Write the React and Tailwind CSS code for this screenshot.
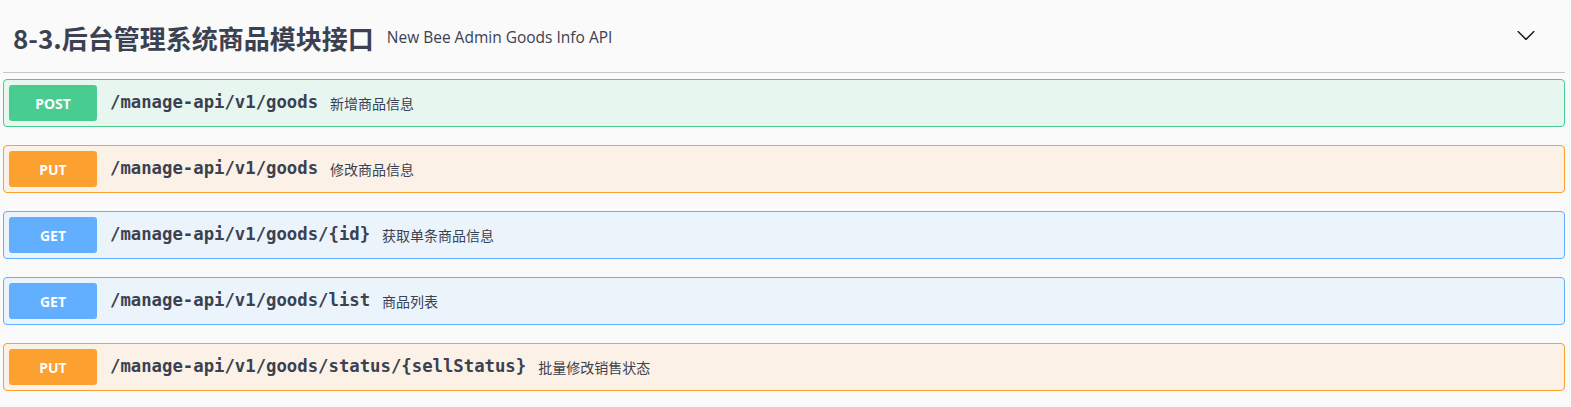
const ROW_STYLES = {
  POST: { row: 'bg-[#e8f6f0] border-[#49cc90]', badge: 'bg-[#49cc90]' },
  PUT: { row: 'bg-[#fcf1e6] border-[#fca130]', badge: 'bg-[#fca130]' },
  GET: { row: 'bg-[#ebf3fb] border-[#61affe]', badge: 'bg-[#61affe]' },
}

const OPERATIONS = [
  { method: 'POST', path: '/manage-api/v1/goods', summary: '新增商品信息' },
  { method: 'PUT', path: '/manage-api/v1/goods', summary: '修改商品信息' },
  { method: 'GET', path: '/manage-api/v1/goods/{id}', summary: '获取单条商品信息' },
  { method: 'GET', path: '/manage-api/v1/goods/list', summary: '商品列表' },
  { method: 'PUT', path: '/manage-api/v1/goods/status/{sellStatus}', summary: '批量修改销售状态' },
]

function ChevronDown() {
  return (
    <svg viewBox="0 0 20 20" className="w-[20px] h-[20px] text-[#1b1b1b]" fill="currentColor">
      <path d="M17.418 6.109c.272-.268.709-.268.979 0s.271.701 0 .969l-7.908 7.83c-.27.268-.707.268-.979 0l-7.908-7.83c-.27-.268-.27-.701 0-.969.271-.268.709-.268.979 0L10 13.25l7.418-7.141z" />
    </svg>
  )
}

function OperationRow({ method, path, summary }) {
  const style = ROW_STYLES[method]
  return (
    <div className={`flex items-center h-[48px] p-[5px] border rounded-[4px] ${style.row}`}>
      <span className={`flex items-center justify-center w-[88px] h-[36px] rounded-[3px] text-white text-[14px] font-bold font-['Noto_Sans',sans-serif] ${style.badge}`}>
        {method}
      </span>
      <span className="ml-[13px] text-[17.3px] font-bold text-[#3b4151] font-['DejaVu_Sans_Mono',monospace]">
        {path}
      </span>
      <span className="ml-[12px] text-[14px] text-[#3b4151] font-['Noto_Sans_CJK_SC',sans-serif]">
        {summary}
      </span>
    </div>
  )
}

export default function App() {
  return (
    <div className="min-h-[407px] bg-[#fafafa]">
      <div className="ml-[3px] mr-[6px]">
        <div className="flex items-center h-[73px] pt-[3px] pl-[10px] pr-[29px] mb-[6px] border-b border-[#c4c6cb]">
          <div className="text-[26px] leading-none font-bold text-[#3b4151] font-['Noto_Sans_CJK_SC',sans-serif]">
            8-3.后台管理系统商品模块接口
          </div>
          <span className="ml-[13px] text-[15.5px] text-[#3b4151] font-['Open_Sans',sans-serif]">
            New Bee Admin Goods Info API
          </span>
          <span className="ml-auto mb-[5px]">
            <ChevronDown />
          </span>
        </div>
        <div className="flex flex-col gap-[18px]">
          {OPERATIONS.map((op, i) => (
            <OperationRow key={i} {...op} />
          ))}
        </div>
      </div>
    </div>
  )
}
